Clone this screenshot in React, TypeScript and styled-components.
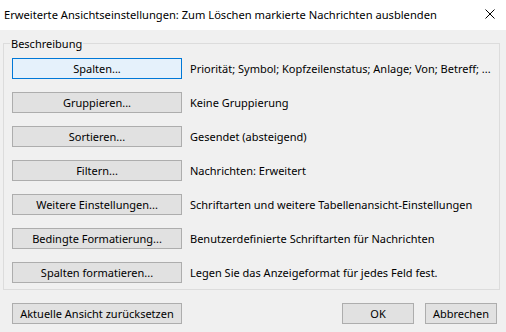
import React from "react";
import styled, { createGlobalStyle } from "styled-components";

const GlobalStyle = createGlobalStyle`
  html, body { margin: 0; padding: 0; background: #f0f0f0; }
  body { font-family: "Noto Sans", "Open Sans", sans-serif; font-size: 11px; color: #000; }
`;

const Window = styled.div`
  width: 506px;
  height: 332px;
  display: flex;
  flex-direction: column;
  background: #f0f0f0;
  overflow: hidden;
`;

const TitleBar = styled.div`
  height: 30px;
  flex: none;
  background: #ffffff;
  display: flex;
  align-items: center;
  padding-left: 4px;
  padding-right: 11px;
  box-sizing: border-box;
`;

const Title = styled.div`
  flex: 1;
  font-size: 11.15px;
  line-height: 15px;
  margin-top: -1px;
  white-space: nowrap;
`;

const CloseButton = styled.button`
  border: 0;
  background: transparent;
  padding: 0;
  width: 10px;
  height: 10px;
  display: flex;
  margin-top: -3px;
  svg { display: block; }
`;

const Body = styled.div`
  flex: 1;
  display: flex;
  flex-direction: column;
  padding-top: 6px;
`;

const GroupBox = styled.fieldset`
  margin: 0 6px 0 3px;
  padding: 7px 8px 6px 8px;
  border: 1px solid #dcdcdc;
  display: flex;
  flex-direction: column;
  gap: 13px;
  min-width: 0;
`;

const Legend = styled.legend`
  margin-left: -2px;
  padding: 0 1px;
  line-height: 15px;
  font-size: 11px;
`;

const Row = styled.div`
  display: flex;
  align-items: center;
  gap: 8px;
`;

const Button = styled.button<{ $focused?: boolean; $width?: number }>`
  flex: none;
  width: ${(p) => p.$width ?? 170}px;
  height: 21px;
  box-sizing: border-box;
  margin: 0;
  padding: 0 2px;
  border: 1px solid ${(p) => (p.$focused ? "#0078d7" : "#adadad")};
  background: ${(p) => (p.$focused ? "#e5f1fb" : "#e1e1e1")};
  font-family: inherit;
  font-size: 11px;
  line-height: 15px;
  color: #000;
  white-space: nowrap;
  display: flex;
  align-items: center;
  justify-content: center;
`;

const Description = styled.span`
  white-space: nowrap;
  line-height: 15px;
`;

const Footer = styled.div`
  display: flex;
  align-items: center;
  margin-top: 13px;
  padding: 0 9px 0 12px;
  gap: 11px;
`;

const Spacer = styled.div`
  flex: 1;
`;

const rows: { label: string; text: string; focused?: boolean }[] = [
  { label: "Spalten...", text: "Priorität; Symbol; Kopfzeilenstatus; Anlage; Von; Betreff; ...", focused: true },
  { label: "Gruppieren...", text: "Keine Gruppierung" },
  { label: "Sortieren...", text: "Gesendet (absteigend)" },
  { label: "Filtern...", text: "Nachrichten: Erweitert" },
  { label: "Weitere Einstellungen...", text: "Schriftarten und weitere Tabellenansicht-Einstellungen" },
  { label: "Bedingte Formatierung...", text: "Benutzerdefinierte Schriftarten für Nachrichten" },
  { label: "Spalten formatieren...", text: "Legen Sie das Anzeigeformat für jedes Feld fest." },
];

export default function App() {
  return (
    <Window>
      <GlobalStyle />
      <TitleBar>
        <Title>Erweiterte Ansichtseinstellungen: Zum Löschen markierte Nachrichten ausblenden</Title>
        <CloseButton aria-label="Schließen">
          <svg width="10" height="10" viewBox="0 0 10 10">
            <path d="M0.5 0.5 L9.5 9.5 M9.5 0.5 L0.5 9.5" stroke="#000" strokeWidth="1" fill="none" />
          </svg>
        </CloseButton>
      </TitleBar>
      <Body>
        <GroupBox>
          <Legend>Beschreibung</Legend>
          {rows.map((r) => (
            <Row key={r.label}>
              <Button $focused={r.focused}>{r.label}</Button>
              <Description>{r.text}</Description>
            </Row>
          ))}
        </GroupBox>
        <Footer>
          <Button>Aktuelle Ansicht zurücksetzen</Button>
          <Spacer />
          <Button $width={72}>OK</Button>
          <Button $width={72}>Abbrechen</Button>
        </Footer>
      </Body>
    </Window>
  );
}
